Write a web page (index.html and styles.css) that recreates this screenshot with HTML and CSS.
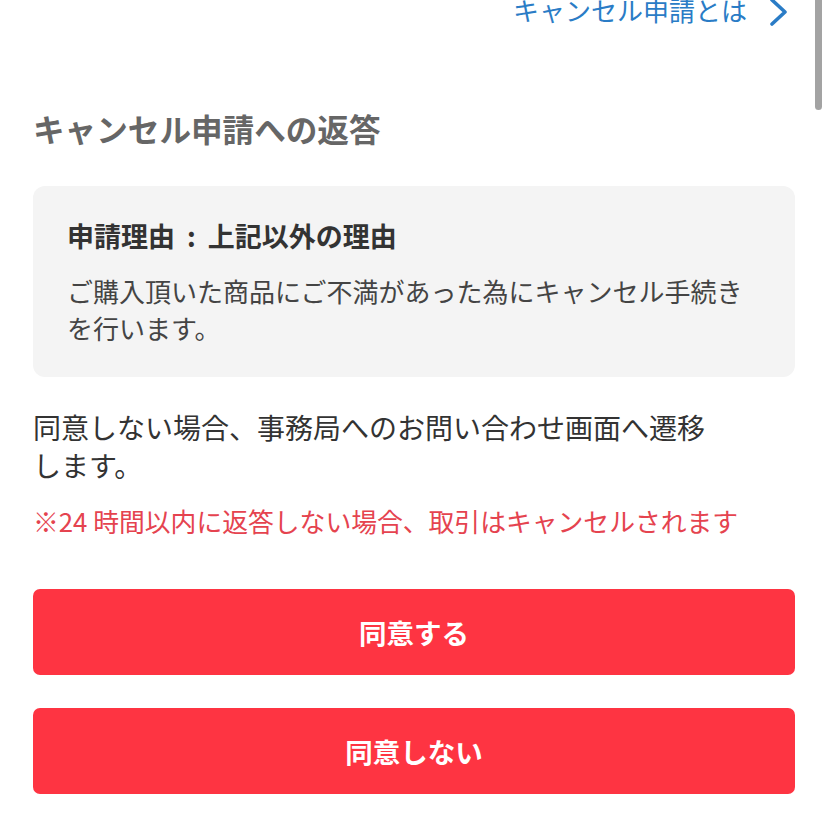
FILE: index.html
```html
<!DOCTYPE html>
<html lang="ja">
<head>
<meta charset="utf-8">
<link rel="stylesheet" href="styles.css">
</head>
<body>
<div class="page">
  <div class="topbar">
    <a class="help-link" href="#">キャンセル申請とは
      <svg class="chev" width="20" height="28" viewBox="0 0 20 28"><polyline points="3,2 16,14 3,26" fill="none" stroke="#2a7cc6" stroke-width="3.6" stroke-linecap="round" stroke-linejoin="round"/></svg>
    </a>
  </div>
  <h2 class="title">キャンセル申請への返答</h2>
  <div class="card">
    <div class="card-title">申請理由<span class="colon">:</span>上記以外の理由</div>
    <p class="card-body">ご購入頂いた商品にご不満があった為にキャンセル手続きを行います。</p>
  </div>
  <p class="desc">同意しない場合、事務局へのお問い合わせ画面へ遷移します。</p>
  <p class="note">※24 時間以内に返答しない場合、取引はキャンセルされます</p>
  <div class="actions">
    <button class="btn">同意する</button>
    <button class="btn">同意しない</button>
  </div>
</div>
<div class="scrollbar"></div>
</body>
</html>
```
FILE: styles.css
```css
* { box-sizing: border-box; }
html, body { margin: 0; padding: 0; background: #fff; }
body {
  font-family: "Noto Sans CJK JP", "Noto Sans", sans-serif;
  color: #333;
  overflow: hidden;
  height: 828px;
}
.page {
  padding: 0 33px;
}
.topbar {
  display: flex;
  justify-content: flex-end;
  margin-top: -7px;
  height: 33px;
}
.help-link {
  display: flex;
  align-items: center;
  gap: 22px;
  color: #2a7cc6;
  text-decoration: none;
  font-size: 26px;
  line-height: 34px;
  margin-right: 6px;
}
.chev { display: block; margin-top: 4px; }
.title {
  margin: 81px 0 0;
  font-size: 31.6px;
  line-height: 43px;
  font-weight: 700;
  color: #666;
}
.card {
  margin-top: 36px;
  background: #f4f4f4;
  border-radius: 12px;
  padding: 32px 34px 31px;
}
.card-title {
  font-size: 27px;
  line-height: 36px;
  font-weight: 700;
  color: #333;
}
.colon {
  margin: 0 12px;
}
.card-body {
  margin: 18px 0 0;
  font-size: 26px;
  line-height: 37px;
  color: #444;
}
.desc {
  margin: 31px 0 0;
  font-size: 28px;
  line-height: 38px;
  max-width: 690px;
  color: #333;
}
.note {
  margin: 19px 0 0;
  font-size: 25.8px;
  line-height: 36px;
  color: #e5434f;
}
.actions {
  margin-top: 50px;
  display: flex;
  flex-direction: column;
  gap: 33px;
}
.btn {
  height: 86px;
  width: 100%;
  border: none;
  border-radius: 7px;
  background: #fe3442;
  color: #fff;
  font-family: inherit;
  font-size: 27.5px;
  font-weight: 700;
}
.scrollbar {
  position: absolute;
  top: 0;
  left: 815px;
  width: 7px;
  height: 110px;
  background: #a3a3a3;
  border-radius: 0 0 4px 4px;
}
```
